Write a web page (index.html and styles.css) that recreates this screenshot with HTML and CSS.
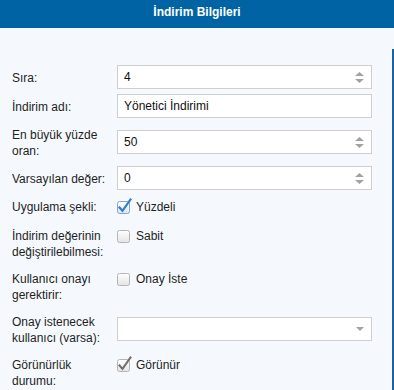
FILE: index.html
```html
<!DOCTYPE html>
<html lang="tr">
<head>
<meta charset="utf-8">
<title>İndirim Bilgileri</title>
<link rel="stylesheet" href="styles.css">
</head>
<body>
<header class="title">İndirim Bilgileri</header>
<div class="panel">
  <div class="row">
    <div class="label">Sıra:</div>
    <div class="input">
      <span class="val">4</span>
      <svg class="spin" width="9" height="11" viewBox="0 0 9 11"><polygon points="0,4 4.5,0 9,4"/><polygon points="0,7 9,7 4.5,11"/></svg>
    </div>
  </div>
  <div class="row">
    <div class="label">İndirim adı:</div>
    <div class="input"><span class="val">Yönetici İndirimi</span></div>
  </div>
  <div class="row">
    <div class="label">En büyük yüzde oran:</div>
    <div class="input">
      <span class="val">50</span>
      <svg class="spin" width="9" height="11" viewBox="0 0 9 11"><polygon points="0,4 4.5,0 9,4"/><polygon points="0,7 9,7 4.5,11"/></svg>
    </div>
  </div>
  <div class="row">
    <div class="label">Varsayılan değer:</div>
    <div class="input">
      <span class="val">0</span>
      <svg class="spin" width="9" height="11" viewBox="0 0 9 11"><polygon points="0,4 4.5,0 9,4"/><polygon points="0,7 9,7 4.5,11"/></svg>
    </div>
  </div>
  <div class="row top">
    <div class="label">Uygulama şekli:</div>
    <div class="check">
      <svg class="box" width="13" height="13" viewBox="0 0 13 13">
        <defs><linearGradient id="g1" x1="0" y1="0" x2="0" y2="1"><stop offset="0" stop-color="#ffffff"/><stop offset="1" stop-color="#e4e4e4"/></linearGradient></defs>
        <rect x="0.5" y="0.5" width="12" height="12" rx="2" fill="url(#g1)" stroke="#7fa8d6"/>
        <path d="M2.5 6.5 L5.5 9.8 L13.5 -1.5" fill="none" stroke="#2f7fd1" stroke-width="2.2" stroke-linecap="square"/>
      </svg>
      <span>Yüzdeli</span>
    </div>
  </div>
  <div class="row top">
    <div class="label">İndirim değerinin değiştirilebilmesi:</div>
    <div class="check">
      <svg class="box" width="13" height="13" viewBox="0 0 13 13">
        <defs><linearGradient id="g2" x1="0" y1="0" x2="0" y2="1"><stop offset="0" stop-color="#ffffff"/><stop offset="1" stop-color="#e4e4e4"/></linearGradient></defs>
        <rect x="0.5" y="0.5" width="12" height="12" rx="2" fill="url(#g2)" stroke="#b4b4b4"/>
      </svg>
      <span>Sabit</span>
    </div>
  </div>
  <div class="row top">
    <div class="label">Kullanıcı onayı gerektirir:</div>
    <div class="check">
      <svg class="box" width="13" height="13" viewBox="0 0 13 13">
        <defs><linearGradient id="g3" x1="0" y1="0" x2="0" y2="1"><stop offset="0" stop-color="#ffffff"/><stop offset="1" stop-color="#e4e4e4"/></linearGradient></defs>
        <rect x="0.5" y="0.5" width="12" height="12" rx="2" fill="url(#g3)" stroke="#b4b4b4"/>
      </svg>
      <span>Onay İste</span>
    </div>
  </div>
  <div class="row">
    <div class="label">Onay istenecek kullanıcı (varsa):</div>
    <div class="input">
      <span class="val"></span>
      <svg class="drop" width="8" height="4" viewBox="0 0 8 4"><polygon points="0,0 8,0 4,4"/></svg>
    </div>
  </div>
  <div class="row top">
    <div class="label">Görünürlük durumu:</div>
    <div class="check">
      <svg class="box" width="13" height="13" viewBox="0 0 13 13">
        <defs><linearGradient id="g4" x1="0" y1="0" x2="0" y2="1"><stop offset="0" stop-color="#ffffff"/><stop offset="1" stop-color="#e4e4e4"/></linearGradient></defs>
        <rect x="0.5" y="0.5" width="12" height="12" rx="2" fill="url(#g4)" stroke="#b4b4b4"/>
        <path d="M2.5 6.5 L5.5 9.8 L13.5 -1.5" fill="none" stroke="#6e6e6e" stroke-width="2" stroke-linecap="square"/>
      </svg>
      <span>Görünür</span>
    </div>
  </div>
</div>
</body>
</html>
```
FILE: styles.css
```css
html, body {
  margin: 0;
  padding: 0;
}
body {
  width: 394px;
  height: 390px;
  overflow: hidden;
  background: #f5f9fd;
  font-family: "Liberation Sans", Arial, sans-serif;
  font-size: 12px;
  color: #1e1e1e;
}
.title {
  height: 28px;
  box-sizing: border-box;
  padding-bottom: 4px;
  line-height: 24px;
  background: #0063a3;
  color: #ffffff;
  font-weight: bold;
  text-align: center;
}
.panel {
  margin-top: 21px;
  height: 341px;
  box-sizing: border-box;
  border-right: 2px solid #2160a0;
  padding: 16px 0 0 12px;
  display: flex;
  flex-direction: column;
  gap: 5px;
}
.row {
  display: flex;
  align-items: center;
}
.row.top {
  align-items: flex-start;
}
.label {
  width: 105px;
  flex: none;
  box-sizing: border-box;
  padding: 4px 6px 2px 0;
  line-height: 16px;
}
.input {
  width: 255px;
  height: 24px;
  box-sizing: border-box;
  border: 1px solid #cfcfcf;
  background: #ffffff;
  display: flex;
  align-items: center;
  justify-content: space-between;
  padding: 0 7px 0 6px;
}
.val {
  line-height: 16px;
  color: #111;
}
.spin, .drop {
  fill: #a2a2a2;
  display: block;
}
.check {
  display: flex;
  align-items: center;
  gap: 6px;
  padding: 4px 0;
  line-height: 16px;
}
.box {
  display: block;
  overflow: visible;
  flex: none;
}
```
